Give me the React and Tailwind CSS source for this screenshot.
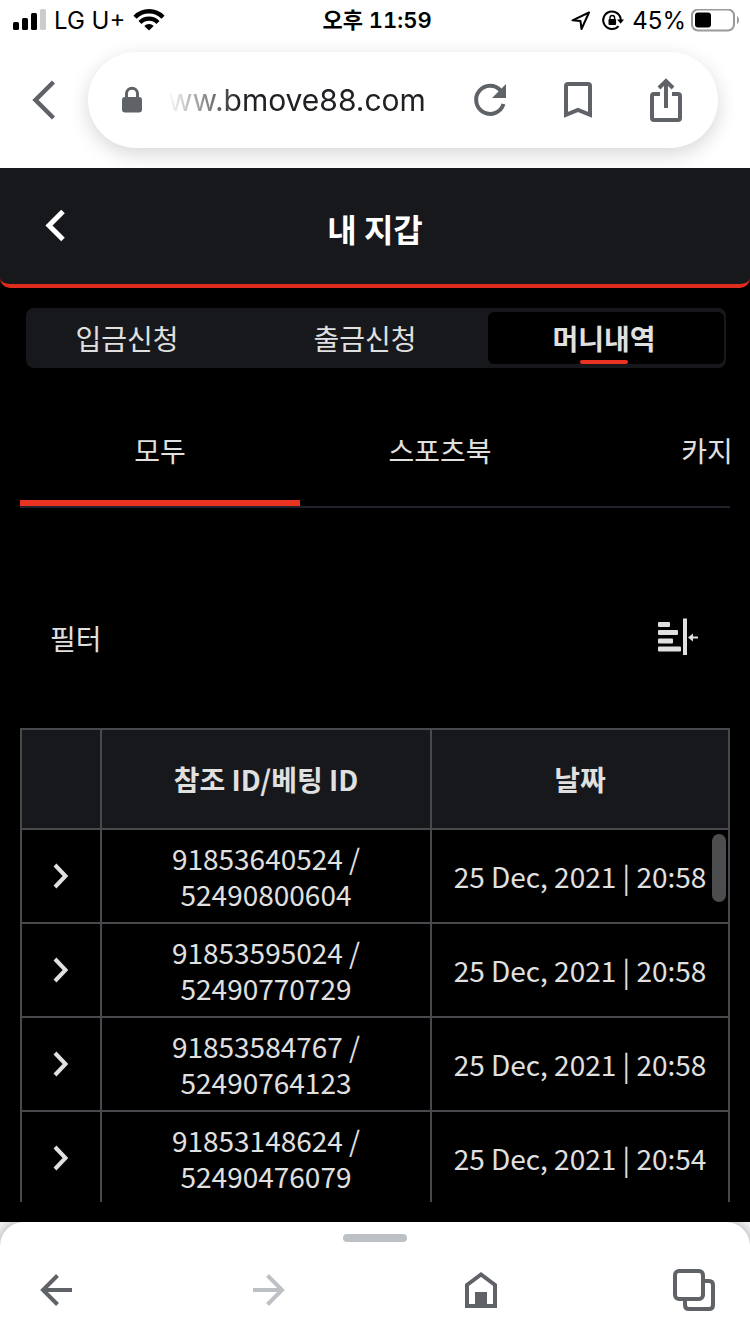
import { useState } from "react";
import clsx from "clsx";

const walletTabs = ["입금신청", "출금신청", "머니내역"];
const categories = ["모두", "스포츠북", "카지노"];

const rows = [
    { refId: "91853640524", betId: "52490800604", date: "25 Dec, 2021 | 20:58" },
    { refId: "91853595024", betId: "52490770729", date: "25 Dec, 2021 | 20:58" },
    { refId: "91853584767", betId: "52490764123", date: "25 Dec, 2021 | 20:58" },
    { refId: "91853148624", betId: "52490476079", date: "25 Dec, 2021 | 20:54" },
];

function StatusBar() {
    return (
        <div className="flex h-10 items-center pl-3 pr-2 pt-0.5 text-2xl text-black">
            <div className="flex flex-1 items-center gap-2">
                <svg className="h-6 w-[34px]" viewBox="0 0 34 24" aria-hidden="true">
                    <rect x="1" y="13" width="6" height="8" rx="1.5" />
                    <rect x="10" y="9" width="6" height="12" rx="1.5" />
                    <rect x="19" y="4" width="6" height="17" rx="1.5" />
                    <rect x="28" y="0" width="6" height="21" rx="1.5" fill="#cccccc" />
                </svg>
                <span>LG U+</span>
                <svg className="h-6 w-8" viewBox="0 0 32 24" aria-hidden="true">
                    <path d="M2 8.200A19.500 19.500 0 0 1 30 8.200" fill="none" stroke="#000" strokeWidth="4.400" />
                    <path d="M7 13.500A12.500 12.500 0 0 1 25 13.500" fill="none" stroke="#000" strokeWidth="4.200" />
                    <path d="M16 21.600L11.300 17A6.800 6.800 0 0 1 20.700 17Z" />
                </svg>
            </div>
            <span className="text-[22px] font-semibold tabular-nums">오후 11:59</span>
            <div className="flex flex-1 items-center justify-end gap-2">
                <svg className="h-6 w-6" viewBox="0 0 24 24" fill="none" stroke="#000" strokeWidth="2" strokeLinejoin="round" aria-hidden="true">
                    <path d="M21 3.500L4.500 11.300L12.500 12.100L13.500 20Z" />
                </svg>
                <svg className="h-6 w-6" viewBox="0 0 24 24" aria-hidden="true">
                    <path d="M20.800 11.500A8.800 8.800 0 1 0 18.500 17.200" fill="none" stroke="#000" strokeWidth="2" />
                    <path d="M17 10.500H24L20.700 14.800Z" />
                    <rect x="8.500" y="10" width="7.600" height="6" rx="1" />
                    <path d="M10 10.500V8.800A2.300 2.300 0 0 1 14.600 8.800V10.500" fill="none" stroke="#000" strokeWidth="1.400" />
                </svg>
                <div className="flex items-center gap-1">
                    <span>45%</span>
                    <svg className="h-6 w-[52px]" viewBox="0 0 52 24" aria-hidden="true">
                        <rect x="2" y="0.500" width="42" height="21" rx="6" fill="none" stroke="#9a9a9a" strokeWidth="2" />
                        <rect x="5" y="3.500" width="16" height="15" rx="3" />
                        <path d="M47 7V15Q49 14 49 11Q49 8 47 7Z" fill="#9a9a9a" />
                    </svg>
                </div>
            </div>
        </div>
    );
}

function AddressBar() {
    return (
        <div className="flex pb-5 pr-8 pt-3">
            <button type="button" aria-label="Back" className="flex w-[88px] items-center justify-center">
                <svg className="h-10 w-6" viewBox="0 0 24 40" fill="none" stroke="#5f6368" strokeWidth="4.500">
                    <path d="M21.500 2L3.500 20L21.500 38" />
                </svg>
            </button>
            <div className="flex h-24 flex-1 items-center rounded-full bg-white pr-2 shadow-[0_6px_20px_rgba(0,0,0,0.16)]">
                <svg className="ml-8 h-8 w-6" viewBox="0 0 24 32" aria-hidden="true">
                    <rect x="2" y="13" width="20" height="15.500" rx="3" fill="#5f6368" />
                    <path d="M6.500 14V9.800A5.500 5.500 0 0 1 17.500 9.800V14" fill="none" stroke="#5f6368" strokeWidth="3" />
                </svg>
                <button type="button" className="ml-6 flex-1 text-left text-[30px] text-[#202124] [mask-image:linear-gradient(to_right,transparent,black_72px)]">
                    ww.bmove88.com
                </button>
                <button type="button" aria-label="Reload" className="flex w-[88px] justify-center">
                    <svg className="h-10 w-10" viewBox="0 0 40 40">
                        <path d="M30.800 10.800A14 14 0 1 0 33.500 24" fill="none" stroke="#5f6368" strokeWidth="4" />
                        <path d="M36 4V18H22Z" fill="#5f6368" />
                    </svg>
                </button>
                <button type="button" aria-label="Bookmark" className="flex w-[88px] justify-center">
                    <svg className="h-10 w-10" viewBox="0 0 40 40" fill="none" stroke="#5f6368" strokeWidth="4">
                        <path d="M8 34.800V6Q8 4 10 4H30Q32 4 32 6V34.800L20 29.800Z" />
                    </svg>
                </button>
                <button type="button" aria-label="Share" className="flex w-[88px] justify-center">
                    <svg className="h-12 w-10" viewBox="0 0 40 48" fill="none" stroke="#5f6368" strokeWidth="4">
                        <path d="M14 18H8Q6 18 6 20V42Q6 44 8 44H32Q34 44 34 42V20Q34 18 32 18H26" />
                        <path d="M20 32V5M13 12L20 5L27 12" />
                    </svg>
                </button>
            </div>
        </div>
    );
}

function WalletTabs({ active, onChange }) {
    return (
        <div className="ml-[26px] mr-6 mt-5 rounded-lg bg-[#17181c] pr-0.5">
            <div className="-ml-4 grid grid-cols-3 py-1">
                {walletTabs.map((label) => (
                    <button
                        key={label}
                        type="button"
                        onClick={() => onChange(label)}
                        className={clsx(
                            "relative h-[52px] rounded-md pr-1 leading-9",
                            active === label && "ml-0.5 bg-black font-bold"
                        )}>
                        {label}
                        {active === label && (
                            <span className="absolute inset-x-0 bottom-0 flex justify-center pr-1">
                                <span className="h-1 w-12 rounded-full bg-[#ea3323]" />
                            </span>
                        )}
                    </button>
                ))}
            </div>
        </div>
    );
}

function CategoryTabs({ active, onChange }) {
    return (
        <nav className="mx-5 mt-7 flex overflow-hidden border-b-2 border-[#20212b]">
            {categories.map((label) => (
                <button
                    key={label}
                    type="button"
                    onClick={() => onChange(label)}
                    className={clsx(
                        "h-[110px] w-[280px] shrink-0 border-b-[6px] pt-1",
                        active === label ? "border-[#ea3323]" : "border-transparent"
                    )}>
                    {label}
                </button>
            ))}
        </nav>
    );
}

function HistoryTable() {
    return (
        <div className="relative mx-5 mb-5 min-h-0 flex-1 overflow-hidden">
            <table className="w-full table-fixed border-collapse text-center leading-9 [&_td]:border-2 [&_td]:border-[#48494d] [&_th]:border-2 [&_th]:border-[#48494d]">
                <colgroup>
                    <col className="w-20" />
                    <col className="w-[330px]" />
                    <col />
                </colgroup>
                <thead>
                    <tr className="h-[100px] bg-[#17181c]">
                        <th></th>
                        <th>참조 ID/베팅 ID</th>
                        <th>날짜</th>
                    </tr>
                </thead>
                <tbody>
                    {rows.map((row) => (
                        <tr key={row.refId} className="h-[94px]">
                            <td>
                                <button type="button" aria-label="Expand" className="mx-auto block">
                                    <svg className="h-8 w-8" viewBox="0 0 32 32" fill="none" stroke="#e0e0e0" strokeWidth="4">
                                        <path d="M10 5L20.500 16L10 27" />
                                    </svg>
                                </button>
                            </td>
                            <td>
                                {row.refId} /<br />
                                {row.betId}
                            </td>
                            <td className="whitespace-nowrap">{row.date}</td>
                        </tr>
                    ))}
                </tbody>
            </table>
            {/* scroll thumb */}
            <div className="absolute right-1 top-[106px] h-[68px] w-3.5 rounded-full bg-[#4c4d4f]" />
        </div>
    );
}

function BottomBar() {
    return (
        <div className="bg-gray-100">
            <div className="flex h-28 flex-col items-center rounded-t-3xl bg-white pt-3 shadow-[0_0_12px_rgba(0,0,0,0.35)] [clip-path:inset(0)]">
                <div className="h-2 w-16 rounded-full bg-[#bdc1c6]" />
                <div className="mt-6 flex w-full justify-between px-8">
                    <button type="button" aria-label="Previous page" className="h-12 w-12">
                        <svg viewBox="0 0 48 48" fill="none" stroke="#5f6368" strokeWidth="4">
                            <path d="M40 24H12M25.500 9.500L11 24L25.500 38.500" />
                        </svg>
                    </button>
                    <button type="button" aria-label="Next page" className="h-12 w-12">
                        <svg viewBox="0 0 48 48" fill="none" stroke="#bdc1c6" strokeWidth="4">
                            <path d="M8 24H36M22.500 9.500L37 24L22.500 38.500" />
                        </svg>
                    </button>
                    <button type="button" aria-label="Home" className="h-12 w-12">
                        <svg viewBox="0 0 48 48" fill="none" stroke="#5f6368" strokeWidth="4">
                            <path d="M10 40V19L24 8.500L38 19V40Z" />
                            <path d="M18 26H30V40H18Z" fill="#5f6368" stroke="none" />
                        </svg>
                    </button>
                    <button type="button" aria-label="Tabs" className="h-12 w-12">
                        <svg viewBox="0 0 48 48" fill="none" stroke="#5f6368" strokeWidth="4">
                            <rect x="5" y="5" width="28" height="28" rx="4" />
                            <path d="M33 15H39Q43 15 43 19V39Q43 43 39 43H19Q15 43 15 39V33" />
                        </svg>
                    </button>
                </div>
            </div>
        </div>
    );
}

export default function App() {
    const [walletTab, setWalletTab] = useState("머니내역");
    const [category, setCategory] = useState("모두");

    return (
        <div className="flex h-screen flex-col bg-black font-['Noto_Sans_CJK_KR',sans-serif] text-[28px] text-[#e0e0e0]">
            <div className="bg-white font-[Inter,'Noto_Sans_CJK_KR',sans-serif]">
                <StatusBar />
                <AddressBar />
            </div>

            <header className="flex h-[120px] items-center rounded-b-[10px] border-b-4 border-[#dd2c1e] bg-[#17181c] text-white">
                <div className="flex-1">
                    <button type="button" aria-label="뒤로" className="ml-10 block">
                        <svg className="h-8 w-8" viewBox="0 0 32 32" fill="none" stroke="#fff" strokeWidth="5">
                            <path d="M23 1.500L9 15.500L23 29.500" />
                        </svg>
                    </button>
                </div>
                <h1 className="pt-1 text-[32px] font-bold">내 지갑</h1>
                <div className="flex-1" />
            </header>

            <WalletTabs active={walletTab} onChange={setWalletTab} />
            <CategoryTabs active={category} onChange={setCategory} />

            <div className="mb-15 mt-25 flex h-15 items-center justify-between px-[50px]">
                <span>필터</span>
                <button type="button" aria-label="필터">
                    <svg className="h-10 w-[42px]" viewBox="0 0 42 40" fill="#e0e0e0">
                        <rect x="0" y="4" width="12" height="5" rx="1" />
                        <rect x="0" y="12" width="20" height="5" rx="1" />
                        <rect x="0" y="20.500" width="15" height="5" rx="1" />
                        <rect x="0" y="28.500" width="23" height="5" rx="1" />
                        <rect x="25" y="0.500" width="4" height="36.500" />
                        <path d="M30 19.500L35 15.500V18.500H40V20.500H35V23.500Z" />
                    </svg>
                </button>
            </div>

            <HistoryTable />
            <BottomBar />
        </div>
    );
}
